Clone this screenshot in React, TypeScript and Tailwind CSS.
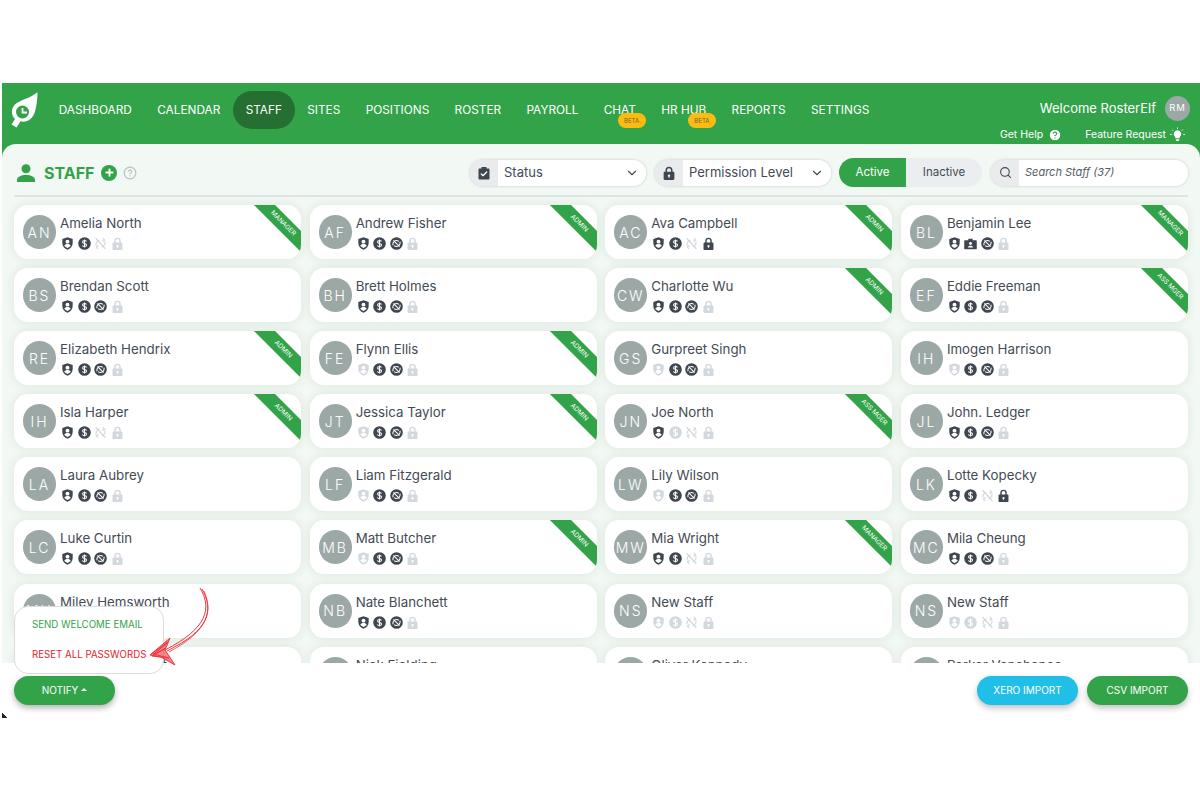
import { Check, ChevronDown, CircleHelp, Plus, Search } from 'lucide-react';

const font = "[font-family:Inter,'Noto_Sans',sans-serif]";

const navItems = ['DASHBOARD', 'CALENDAR', 'STAFF', 'SITES', 'POSITIONS', 'ROSTER', 'PAYROLL', 'CHAT', 'HR HUB', 'REPORTS', 'SETTINGS'];

type Staff = {
  name: string;
  initials: string;
  flags: [number, number, number, number];
  ribbon?: string;
  badge?: boolean;
};

const staff: Staff[] = [
  { name: 'Amelia North', initials: 'AN', flags: [1, 1, 0, 0], ribbon: 'MANAGER' },
  { name: 'Andrew Fisher', initials: 'AF', flags: [1, 1, 1, 0], ribbon: 'ADMIN' },
  { name: 'Ava Campbell', initials: 'AC', flags: [1, 1, 0, 1], ribbon: 'ADMIN' },
  { name: 'Benjamin Lee', initials: 'BL', flags: [1, 1, 1, 0], ribbon: 'MANAGER', badge: true },
  { name: 'Brendan Scott', initials: 'BS', flags: [1, 1, 1, 0] },
  { name: 'Brett Holmes', initials: 'BH', flags: [1, 1, 1, 0] },
  { name: 'Charlotte Wu', initials: 'CW', flags: [1, 1, 1, 0], ribbon: 'ADMIN' },
  { name: 'Eddie Freeman', initials: 'EF', flags: [1, 1, 1, 0], ribbon: 'ASS MGER' },
  { name: 'Elizabeth Hendrix', initials: 'RE', flags: [1, 1, 1, 0], ribbon: 'ADMIN' },
  { name: 'Flynn Ellis', initials: 'FE', flags: [0, 1, 1, 0], ribbon: 'ADMIN' },
  { name: 'Gurpreet Singh', initials: 'GS', flags: [0, 1, 1, 0] },
  { name: 'Imogen Harrison', initials: 'IH', flags: [0, 1, 1, 0] },
  { name: 'Isla Harper', initials: 'IH', flags: [1, 1, 0, 0], ribbon: 'ADMIN' },
  { name: 'Jessica Taylor', initials: 'JT', flags: [0, 1, 1, 0], ribbon: 'ADMIN' },
  { name: 'Joe North', initials: 'JN', flags: [1, 0, 0, 0], ribbon: 'ASS MGER' },
  { name: 'John. Ledger', initials: 'JL', flags: [1, 1, 1, 0] },
  { name: 'Laura Aubrey', initials: 'LA', flags: [1, 1, 1, 0] },
  { name: 'Liam Fitzgerald', initials: 'LF', flags: [0, 1, 1, 0] },
  { name: 'Lily Wilson', initials: 'LW', flags: [0, 1, 1, 0] },
  { name: 'Lotte Kopecky', initials: 'LK', flags: [1, 1, 0, 1] },
  { name: 'Luke Curtin', initials: 'LC', flags: [1, 1, 1, 0] },
  { name: 'Matt Butcher', initials: 'MB', flags: [0, 1, 1, 0], ribbon: 'ADMIN' },
  { name: 'Mia Wright', initials: 'MW', flags: [1, 1, 0, 0], ribbon: 'MANAGER' },
  { name: 'Mila Cheung', initials: 'MC', flags: [1, 1, 1, 0] },
  { name: 'Miley Hemsworth', initials: 'MH', flags: [1, 1, 1, 0] },
  { name: 'Nate Blanchett', initials: 'NB', flags: [1, 1, 1, 0] },
  { name: 'New Staff', initials: 'NS', flags: [0, 0, 0, 0] },
  { name: 'New Staff', initials: 'NS', flags: [0, 0, 0, 0] },
  { name: 'Nathaniel Sutcliff', initials: 'NS', flags: [1, 1, 1, 0] },
  { name: 'Nick Fielding', initials: 'NF', flags: [1, 1, 1, 0] },
  { name: 'Oliver Kennedy', initials: 'OK', flags: [1, 1, 1, 0] },
  { name: 'Parker Vanchenee', initials: 'PV', flags: [1, 1, 1, 0] },
];

function ShieldUser({ className }: { className: string }) {
  return (
    <svg viewBox="0 0 12 12" className={className} fill="currentColor">
      <path d="M6 .2 10.800 1.800v3.800c0 3-2.100 5.200-4.800 6.200C3.300 10.800 1.200 8.600 1.200 5.600V1.800z" />
      <circle cx="6" cy="4.300" r="1.800" fill="#fff" />
      <path d="M3 8.100c.5-1 1.600-1.600 3-1.600s2.500.6 3 1.600c-.7.9-1.800 1.600-3 2-1.200-.4-2.300-1.100-3-2z" fill="#fff" />
    </svg>
  );
}

function Dollar({ className }: { className: string }) {
  return (
    <svg viewBox="0 0 12 12" className={className}>
      <circle cx="6" cy="6" r="5.800" fill="currentColor" />
      <path d="M7.800 4.200C7.500 3.500 6.800 3.200 6 3.200c-1 0-1.800.5-1.800 1.400 0 1.900 3.700.9 3.700 2.800 0 .9-.9 1.400-1.900 1.400-.9 0-1.600-.4-1.900-1.100M6 2.200v7.600" fill="none" stroke="#fff" strokeWidth="1" />
    </svg>
  );
}

function IdBadge({ className }: { className: string }) {
  return (
    <svg viewBox="0 0 12 12" className={className} fill="currentColor">
      <path d="M4 1.500h4v1.500h3a.8.8 0 0 1 .8.800v6.700a.8.8 0 0 1-.8.800H1a.8.8 0 0 1-.8-.800V3.800A.8.8 0 0 1 1 3h3z" />
      <circle cx="6" cy="6" r="1.300" fill="#fff" />
      <path d="M3.500 9.600c.3-1.100 1.200-1.600 2.500-1.600s2.200.5 2.500 1.600z" fill="#fff" />
    </svg>
  );
}

function NoSync({ className, on }: { className: string; on: boolean }) {
  if (!on) {
    return (
      <svg viewBox="0 0 12 12" className={className} fill="none" stroke="currentColor" strokeWidth="1.200">
        <path d="M1.500 1.200 10.500 10.800M2 7.800c-.5-2 .6-4.300 3-5M8.300 1l1.500 1.800-2 1.200M10 4.200c.5 2-.6 4.300-3 5M3.700 11 2.200 9.200l2-1.200" />
      </svg>
    );
  }
  return (
    <svg viewBox="0 0 12 12" className={className}>
      <circle cx="6" cy="6" r="5.800" fill="currentColor" />
      <path d="M2.800 7.600C2.200 5.600 3.700 3.200 6 3.200c.9 0 1.600.3 2.200.8M9.200 4.400c.6 2-.9 4.400-3.200 4.400-.9 0-1.600-.3-2.200-.8M3.200 3.200 8.800 8.800" fill="none" stroke="#fff" strokeWidth="1" />
    </svg>
  );
}

function LockIcon({ className }: { className: string }) {
  return (
    <svg viewBox="0 0 12 12" className={className} fill="currentColor">
      <path fillRule="evenodd" d="M3 5V3.600a3 3 0 0 1 6 0V5h.6c.6 0 1 .4 1 1v5c0 .6-.4 1-1 1H2.400c-.6 0-1-.4-1-1V6c0-.6.4-1 1-1zm1.300 0h3.400V3.600a1.700 1.700 0 0 0-3.400 0zM6 7.300a1 1 0 0 0-.5 1.900V10h1v-.8A1 1 0 0 0 6 7.300z" />
    </svg>
  );
}

function ClipboardIcon({ className }: { className: string }) {
  return (
    <div className={`relative ${className}`}>
      <svg viewBox="0 0 14 14" className="h-full w-full" fill="#3f4650">
        <path d="M4.500 1h5v1.500h2.200c.4 0 .8.400.8.800v9.400c0 .4-.4.800-.8.800H2.300c-.4 0-.8-.4-.8-.800V3.300c0-.4.400-.8.800-.8h2.200z" />
      </svg>
      <Check className="absolute left-[3px] top-[4px] h-[8px] w-[8px] text-white" strokeWidth={4} />
    </div>
  );
}

function LeafLogo() {
  return (
    <svg viewBox="0 0 27 36" className="h-[36px] w-[27px]">
      <path d="M26.500.2C26.500 8 25.500 14 24 19.500 22 27 15.500 31 9.500 29.300L5.500 35.500.6 32.500 4 27C.4 23.500-.4 17.500 3.500 13 8 8 18 7 26.500.2z" fill="#fff" />
      <circle cx="11.500" cy="20" r="6.500" fill="#33a34a" />
      <path d="M11.500 16v4.500H16" fill="none" stroke="#fff" strokeWidth="1.800" />
    </svg>
  );
}

function Bulb() {
  return (
    <svg viewBox="0 0 16 16" className="ml-[4px] mr-[5px] h-[15px] w-[15px]" fill="#fff">
      <path d="M8 3.500a4 4 0 0 0-2.300 7.300V12h4.600v-1.200A4 4 0 0 0 8 3.500zM6.200 13h3.600v1.100l-.8.900H7l-.8-.9z" />
      <path d="M8 .5v1.600M2.300 2.800l1.100 1.100M13.700 2.800l-1.100 1.100M.2 8h1.600M14.200 8h1.600" stroke="#fff" strokeWidth="1" />
    </svg>
  );
}

function StaffCard({ person }: { person: Staff }) {
  const tone = (i: number) => (person.flags[i] ? 'text-[#3f4650]' : 'text-[#d3d8de]');
  return (
    <div className="relative h-[54px] overflow-hidden rounded-[14px] bg-white shadow-[0_0_10px_rgba(60,110,70,0.12)]">
      <div className="flex h-full items-center pl-[9px]">
        <div className="flex h-[34px] w-[33px] shrink-0 items-center justify-center rounded-full bg-[#9ca8a6] text-[14px] font-light tracking-[2px] text-white">
          {person.initials}
        </div>
        <div className="ml-[4px] flex flex-col">
          <div className="text-[13.300px] leading-[18px] text-[#444b55]">{person.name}</div>
          <div className="mt-[5px] flex items-center gap-[3.500px] pl-px">
            <ShieldUser className={`h-[13px] w-[13px] ${tone(0)}`} />
            {person.badge ? (
              <IdBadge className="h-[13px] w-[13px] text-[#3f4650]" />
            ) : (
              <Dollar className={`h-[13px] w-[13px] ${tone(1)}`} />
            )}
            <NoSync className={`h-[13px] w-[13px] ${tone(2)}`} on={!!person.flags[2]} />
            <LockIcon className={`h-[13px] w-[13px] ${tone(3)}`} />
          </div>
        </div>
      </div>
      {person.ribbon && (
        <div className="absolute right-[-27px] top-[11px] flex h-[15px] w-[90px] rotate-45 items-center justify-center bg-[#33a34a] text-[6.500px] text-white">
          {person.ribbon}
        </div>
      )}
    </div>
  );
}

export default function App() {
  return (
    <div className={`relative h-[800px] w-[1200px] overflow-hidden bg-white pl-[2px] pt-[83px] ${font}`}>
      <div className="flex h-[635px] flex-col bg-[#33a34a]">
        {/* Top nav */}
        <header className="flex h-[61px] shrink-0 items-start text-white">
          <div className="ml-[9px] mt-[9px] w-[35px] shrink-0">
            <LeafLogo />
          </div>
          <nav className="mt-[8px] flex items-center text-[11.800px]">
            {navItems.map((item) => (
              <div
                key={item}
                className={`relative flex h-[38px] items-center rounded-full px-[12.700px] pt-px ${item === 'STAFF' ? 'bg-[#256f33]' : ''}`}
              >
                {item}
                {(item === 'CHAT' || item === 'HR HUB') && (
                  <span className="absolute right-[3px] top-[22px] flex h-[15px] w-[28px] items-center justify-center rounded-full bg-[#fdbb11] text-[6px] text-[#6b6a3a]">
                    BETA
                  </span>
                )}
              </div>
            ))}
          </nav>
          <div className="ml-auto flex flex-col items-end pr-[10px] pt-[13px]">
            <div className="flex items-center gap-[9px] text-[13px]">
              Welcome RosterElf
              <div className="flex h-[25px] w-[25px] items-center justify-center rounded-full bg-[#9ca8a6] text-[9.500px] tracking-[1px]">RM</div>
            </div>
            <div className="mt-[6px] flex items-center text-[10.500px]">
              <span>Get Help</span>
              <CircleHelp className="ml-[5px] h-[14px] w-[14px] fill-white text-[#33a34a]" />
              <span className="ml-[23px]">Feature Request</span>
              <Bulb />
            </div>
          </div>
        </header>

        {/* Main panel */}
        <main className="flex min-h-0 flex-1 flex-col overflow-hidden rounded-t-[14px] bg-[#f2f8f3]">
          <div className="mx-[12px] flex h-[53px] shrink-0 items-center border-b-2 border-[#dfe3e1] pt-[6px]">
            <svg viewBox="0 0 18 18" className="ml-[3px] h-[18px] w-[18px]" fill="#33a34a">
              <circle cx="9" cy="4.700" r="4.500" />
              <path d="M0 18v-2c0-3 4-5 9-5s9 2 9 5v2z" />
            </svg>
            <span className="ml-[9px] text-[16px] font-bold text-[#33a34a]">STAFF</span>
            <span className="ml-[7px] flex h-[16px] w-[16px] items-center justify-center rounded-full bg-[#33a34a]">
              <Plus className="h-[11px] w-[11px] text-white" strokeWidth={4} />
            </span>
            <CircleHelp className="ml-[6px] h-[14px] w-[14px] text-[#b9c0c0]" />
            <div className="ml-auto flex items-center">
              <div className="flex h-[26px] w-[176px] overflow-hidden rounded-full shadow-[0_0_3px_rgba(0,0,0,0.2)]">
                <div className="flex w-[28px] items-center justify-center bg-[#e9ebec]">
                  <ClipboardIcon className="h-[14px] w-[14px]" />
                </div>
                <div className="flex flex-1 items-center justify-between bg-white pl-[6px] pr-[7px] text-[13px] text-[#444b55]">
                  Status
                  <ChevronDown className="h-[14px] w-[14px]" />
                </div>
              </div>
              <div className="ml-[9px] flex h-[26px] w-[176px] overflow-hidden rounded-full shadow-[0_0_3px_rgba(0,0,0,0.2)]">
                <div className="flex w-[28px] items-center justify-center bg-[#e9ebec]">
                  <LockIcon className="h-[14px] w-[14px] text-[#3f4650]" />
                </div>
                <div className="flex flex-1 items-center justify-between bg-white pl-[6px] pr-[7px] text-[13px] text-[#444b55]">
                  Permission Level
                  <ChevronDown className="h-[14px] w-[14px]" />
                </div>
              </div>
              <div className="ml-[8px] flex h-[29px] w-[143px] overflow-hidden rounded-full text-[11.500px]">
                <div className="flex w-[67px] items-center justify-center bg-[#33a34a] text-white">Active</div>
                <div className="flex flex-1 items-center justify-center bg-[#ebeef0] text-[#444b55]">Inactive</div>
              </div>
              <div className="ml-[9px] flex h-[26px] w-[197px] overflow-hidden rounded-full shadow-[0_0_3px_rgba(0,0,0,0.2)]">
                <div className="flex w-[28px] items-center justify-center bg-[#e9ebec]">
                  <Search className="h-[13px] w-[13px] text-[#3f4650]" />
                </div>
                <div className="flex flex-1 items-center bg-white pl-[6px] text-[11px] italic text-[#555c66]">Search Staff (37)</div>
              </div>
            </div>
          </div>

          <div className="grid min-h-0 flex-1 grid-cols-4 content-start gap-x-[8.500px] gap-y-[9.100px] overflow-hidden pl-[12px] pr-[12px] pt-[8px]">
            {staff.map((person, i) => (
              <StaffCard key={`${person.name}-${i}`} person={person} />
            ))}
          </div>
        </main>

        {/* Footer actions */}
        <footer className="relative flex h-[55px] shrink-0 items-start justify-between bg-white px-[12px] pt-[13px] text-[10px] text-white">
          <button className="flex h-[29px] w-[101px] items-center justify-center gap-[3px] rounded-full bg-[#33a34a] shadow-[0_3px_6px_rgba(0,0,0,0.3)]">
            NOTIFY
            <span className="mb-[2px] h-0 w-0 border-x-[3px] border-b-[3px] border-x-transparent border-b-white" />
          </button>
          <div className="flex gap-[9px]">
            <button className="h-[29px] w-[101px] rounded-full bg-[#1fbfe8] shadow-[0_3px_6px_rgba(0,0,0,0.25)]">XERO IMPORT</button>
            <button className="h-[29px] w-[101px] rounded-full bg-[#33a34a] shadow-[0_3px_6px_rgba(0,0,0,0.25)]">CSV IMPORT</button>
          </div>
          <div className="absolute bottom-[44px] left-[12px] flex h-[68px] w-[150px] flex-col justify-center gap-[15px] rounded-[14px] border border-[#dcdcdc] bg-white pl-[17px] text-[9.700px]">
            <span className="text-[#33a34a]">SEND WELCOME EMAIL</span>
            <span className="text-[#e2262d]">RESET ALL PASSWORDS</span>
          </div>
          {/* Hand drawn arrow */}
          <svg viewBox="0 0 70 90" className="absolute bottom-[44px] left-[146px] h-[90px] w-[70px]" fill="none" stroke="#f0353b">
            <path d="M52 4C64 24 60 44 17 66" strokeWidth="1" />
            <path d="M54 5C66 26 62 46 19 67" strokeWidth="1" />
            <path d="M56 7C65 28 60 47 21 68" strokeWidth="0.800" />
            <path d="M2 71 22 54 17 66 27 81 13 73z" fill="#f0353b" fillOpacity="0.6" strokeWidth="1" />
            <path d="M2 71 20 58 5 71 18 64 4 72 21 74 5 70" strokeWidth="1" />
          </svg>
        </footer>
      </div>
      <div className="absolute left-[2px] top-[713px] h-[5px] w-[5px] bg-[linear-gradient(45deg,#222_50%,transparent_50%)]" />
    </div>
  );
}
